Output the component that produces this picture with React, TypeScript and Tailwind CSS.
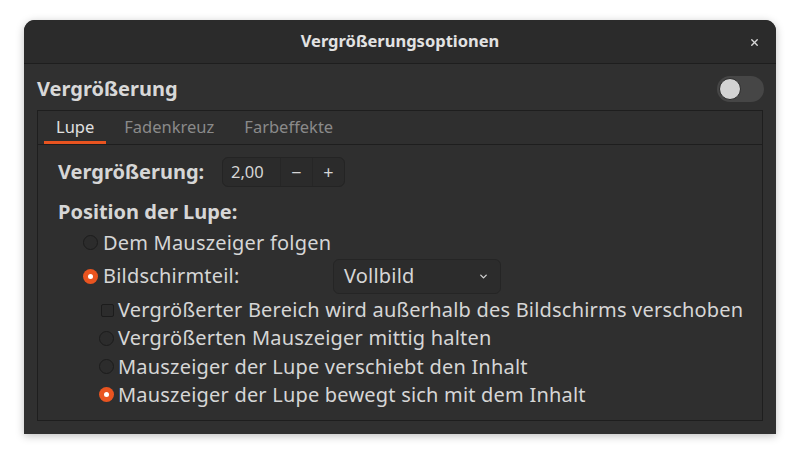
import { ChevronDown, X } from "lucide-react";

const font = { fontFamily: '"Noto Sans", "Open Sans", sans-serif' };

function Radio({ checked }: { checked?: boolean }) {
    if (checked) {
        return (
            <span className="flex h-[15px] w-[15px] shrink-0 items-center justify-center rounded-full bg-[#e95420]">
                <span className="h-[5px] w-[5px] rounded-full bg-white" />
            </span>
        );
    }
    return <span className="h-[15px] w-[15px] shrink-0 rounded-full border border-[#1c1c1c] bg-[#2c2c2c]" />;
}

function Tab({ label, active }: { label: string; active?: boolean }) {
    return (
        <div
            className={
                active
                    ? "flex h-full items-center border-b-[3px] border-[#e95420] px-3 pt-[3px] text-[#e0e0e0]"
                    : "flex h-full items-center border-b-[3px] border-transparent px-3 pt-[3px] text-[#8a8a8a]"
            }
        >
            {label}
        </div>
    );
}

export default function App() {
    return (
        <div className="h-[460px] w-[800px] bg-white px-6 pt-5" style={font}>
            <div className="flex h-[414px] w-[752px] flex-col overflow-hidden rounded-t-[11px] bg-[#303030] shadow-[0_2px_8px_rgba(0,0,0,0.25)]">
                <div className="relative flex h-[44px] shrink-0 items-center justify-center border-b border-[#1e1e1e] bg-[#2b2b2b]">
                    <span className="text-[16.5px] font-bold text-[#e2e2e2]">Vergrößerungsoptionen</span>
                    <X className="absolute right-[16px] top-[17px] h-[11px] w-[11px] text-[#d8d8d8]" strokeWidth={3} />
                </div>

                <div className="flex flex-1 flex-col px-[13px] pb-[13px]">
                    <div className="flex h-[46px] shrink-0 items-center justify-between pt-[3px]">
                        <span className="text-[20px] font-bold text-[#d8d8d8]">Vergrößerung</span>
                        <div className="mr-[-1px] flex h-[26px] w-[47px] items-center rounded-full bg-[#464646] px-[2px]">
                            <span className="h-[22px] w-[22px] rounded-full border border-[#2a2a2a] bg-[#d3d3d3]" />
                        </div>
                    </div>

                    <div className="flex flex-1 flex-col border border-[#1e1e1e] bg-[#2f2f2f]">
                        <div className="flex h-[34px] shrink-0 items-stretch gap-[6px] border-b border-[#1e1e1e] pl-[6px] text-[16.5px]">
                            <Tab label="Lupe" active />
                            <Tab label="Fadenkreuz" />
                            <Tab label="Farbeffekte" />
                        </div>

                        <div className="flex flex-col pl-5 pt-[12px] text-[20px] leading-[24px] tracking-[0.2px] text-[#d6d6d6]">
                            <div className="flex h-[30px] items-center">
                                <span className="w-[164px] font-bold tracking-normal">Vergrößerung:</span>
                                <div className="flex h-[30px] w-[123px] items-stretch rounded-[6px] border border-[#242424] bg-[#2b2b2b] text-[16.5px] tracking-normal">
                                    <span className="flex w-[57px] items-center pl-2">2,00</span>
                                    <span className="flex w-[32px] items-center justify-center border-l border-[#262626] text-[18px]">−</span>
                                    <span className="flex flex-1 items-center justify-center border-l border-[#262626] text-[18px]">+</span>
                                </div>
                            </div>

                            <div className="mt-[10px] flex h-[30px] items-center font-bold tracking-normal">Position der Lupe:</div>

                            <div className="flex h-[28px] items-center gap-[5px] pl-[25px] pt-[3px]">
                                <Radio />
                                <span>Dem Mauszeiger folgen</span>
                            </div>

                            <div className="flex h-[38px] items-center pl-[25px] pt-[4px]">
                                <Radio checked />
                                <span className="ml-[5px] w-[230px]">Bildschirmteil:</span>
                                <div className="flex h-[35px] w-[168px] items-center justify-between rounded-[6px] border border-[#252525] bg-[#2c2c2c] pl-[10px] pr-[11px]">
                                    <span>Vollbild</span>
                                    <ChevronDown className="h-[11px] w-[11px] text-[#d0d0d0]" strokeWidth={3} />
                                </div>
                            </div>

                            <div className="flex h-[29px] items-center gap-[4px] pl-[43px] pt-[5px]">
                                <span className="h-[13px] w-[13px] shrink-0 rounded-[2px] border border-[#1c1c1c] bg-[#2c2c2c]" />
                                <span>Vergrößerter Bereich wird außerhalb des Bildschirms verschoben</span>
                            </div>

                            <div className="flex h-[29px] items-center gap-[4px] pl-[41px] pt-[3px]">
                                <Radio />
                                <span>Vergrößerten Mauszeiger mittig halten</span>
                            </div>

                            <div className="flex h-[28px] items-center gap-[4px] pl-[41px] pt-[3px]">
                                <Radio />
                                <span>Mauszeiger der Lupe verschiebt den Inhalt</span>
                            </div>

                            <div className="flex h-[28px] items-center gap-[4px] pl-[41px] pt-[3px]">
                                <Radio checked />
                                <span>Mauszeiger der Lupe bewegt sich mit dem Inhalt</span>
                            </div>
                        </div>
                    </div>
                </div>
            </div>
        </div>
    );
}
